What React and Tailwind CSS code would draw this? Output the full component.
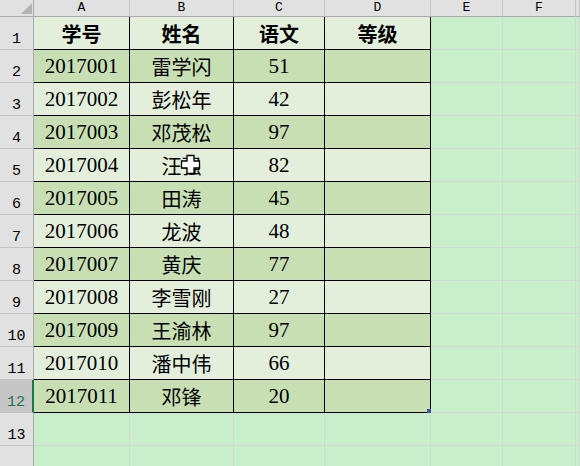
import React from "react";

const rows = [
  ["学号", "姓名", "语文", "等级"],
  ["2017001", "雷学闪", "51", ""],
  ["2017002", "彭松年", "42", ""],
  ["2017003", "邓茂松", "97", ""],
  ["2017004", "汪强", "82", ""],
  ["2017005", "田涛", "45", ""],
  ["2017006", "龙波", "48", ""],
  ["2017007", "黄庆", "77", ""],
  ["2017008", "李雪刚", "27", ""],
  ["2017009", "王渝林", "97", ""],
  ["2017010", "潘中伟", "66", ""],
  ["2017011", "邓锋", "20", ""],
];

const cols = ["A", "B", "C", "D", "E", "F", ""];

export default function App() {
  const cells = [];
  cells.push(
    <div key="corner" className="relative bg-[#e1e1e1] border-r border-b border-r-[#a9a9a9] border-b-[#a9a9a9]">
      <svg className="absolute left-[21px] top-[3px]" width="11" height="11" viewBox="0 0 11 11">
        <polygon points="11,0 11,11 0,11" fill="#b4b4b4" />
      </svg>
    </div>
  );
  cols.forEach((c, i) => {
    cells.push(
      <div
        key={"h" + i}
        className="bg-[#e1e1e1] border-r border-b border-r-[#c4c4c4] border-b-[#a9a9a9] flex justify-center pt-[1px] text-[13px] leading-[14px] text-black font-['Liberation_Mono',monospace]"
      >
        {c}
      </div>
    );
  });

  for (let r = 1; r <= 14; r++) {
    const selected = r === 12;
    cells.push(
      <div
        key={"rh" + r}
        className={
          (selected
            ? "bg-[#c6c6c6] text-[#217346] border-r-2 border-r-[#217346] "
            : "bg-[#e1e1e1] text-black border-r border-r-[#a9a9a9] ") +
          "border-b border-b-[#c4c4c4] flex items-end justify-center pb-[1px] text-[15px] leading-[17px] font-['Liberation_Mono',monospace]"
        }
      >
        {r <= 13 ? r : ""}
      </div>
    );
    for (let c = 0; c < 7; c++) {
      const inTable = r <= 12 && c < 4;
      const data = inTable ? rows[r - 1][c] : "";
      let bg = "bg-[#c9eecb]";
      if (inTable) bg = r % 2 === 0 ? "bg-[#c7dfb3]" : "bg-[#e3efdb]";
      const borderB = inTable ? "border-b-black" : "border-b-[#d2d9d2]";
      const borderR = inTable ? "border-r-black" : "border-r-[#d2d9d2]";
      const isNum = /^[0-9]+$/.test(data);
      const font = isNum
        ? "font-['Liberation_Serif',serif] text-[21px]"
        : "font-['Noto_Sans_CJK_SC',sans-serif] text-[20px]";
      const bold = r === 1 ? "font-bold" : "font-normal";
      cells.push(
        <div
          key={"c" + r + "-" + c}
          className={`relative ${bg} border-r border-b ${borderB} ${borderR} flex items-center justify-center text-black ${font} ${bold} leading-none pt-[1px]`}
        >
          {data}
          {r === 5 && c === 1 && (
            <svg className="absolute left-[50px] top-[5px]" width="21" height="21" viewBox="0 0 21 21">
              <path
                d="M7 1.5 H14 V7 H19.5 V14 H14 V19.5 H7 V14 H1.5 V7 H7 Z"
                fill="#ffffff"
                stroke="#000000"
                strokeWidth="1.3"
              />
            </svg>
          )}
          {r === 12 && c === 3 && (
            <div className="absolute right-[-1px] bottom-[-1px] w-[4px] h-[4px] bg-[#3f51a6]" />
          )}
        </div>
      );
    }
  }

  return (
    <div className="w-[580px] h-[466px] overflow-hidden bg-[#c9eecb]">
      <div className="grid grid-cols-[34px_96px_104px_91px_106px_72px_73px_1fr] grid-rows-[17px_repeat(14,33px)]">
        {cells}
      </div>
    </div>
  );
}
